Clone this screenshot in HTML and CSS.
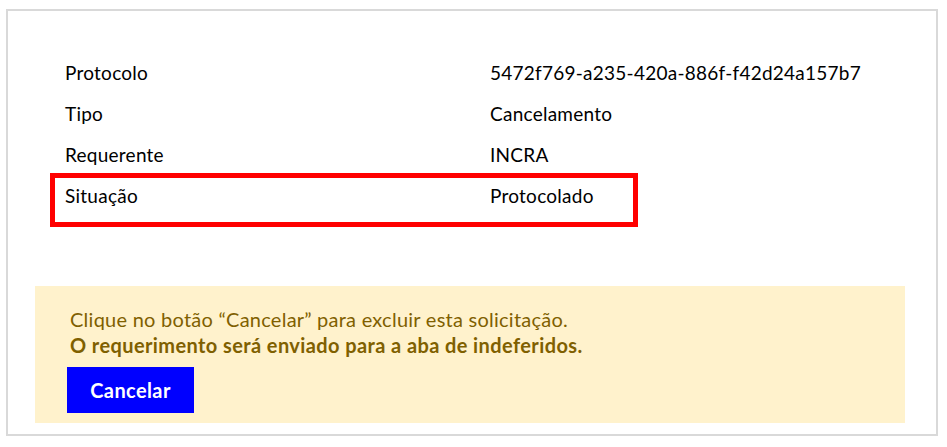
FILE: index.html
```html
<!DOCTYPE html>
<html lang="pt-BR">
<head>
  <meta charset="UTF-8" />
  <meta name="viewport" content="width=device-width, initial-scale=1.0"/>
  <title>Requerimento</title>
  <link rel="stylesheet" href="styles.css">
</head>
<body>
  <div class="frame">
    <div class="details">
      <div class="row">
        <span>Protocolo</span>
        <span>5472f769-a235-420a-886f-f42d24a157b7</span>
      </div>
      <div class="row">
        <span>Tipo</span>
        <span>Cancelamento</span>
      </div>
      <div class="row">
        <span>Requerente</span>
        <span>INCRA</span>
      </div>
      <div class="row highlight">
        <span>Situação</span>
        <span>Protocolado</span>
      </div>
    </div>

    <div class="notice">
      <p>Clique no botão “Cancelar” para excluir esta solicitação.</p>
      <p class="strong">O requerimento será enviado para a aba de indeferidos.</p>
      <button>Cancelar</button>
    </div>
  </div>
</body>
</html>
```

FILE: styles.css
```css
body {
  margin: 0;
  background: white;
  font-family: Lato, "Open Sans", sans-serif;
  color: #000;
}
.frame {
  box-sizing: border-box;
  margin: 9px 0 0 6px;
  width: 932px;
  height: 427px;
  border: 2px solid #d9d9d9;
  padding-top: 41px;
}
.details {
  margin-left: 42px;
}
.row {
  display: grid;
  grid-template-columns: 425px auto;
  height: 41px;
  line-height: 41px;
  padding-left: 15px;
  font-size: 19px;
  letter-spacing: 0.25px;
}
.highlight {
  box-sizing: border-box;
  width: 588px;
  height: 54px;
  margin-top: -2px;
  padding-left: 10px;
  border: 5px solid #ff0000;
  line-height: 36px;
}
.notice {
  box-sizing: border-box;
  margin: 59px 0 0 27px;
  width: 870px;
  height: 137px;
  background: #fff2cc;
  color: #7f6000;
  padding: 20px 0 0 35px;
  font-size: 20px;
  letter-spacing: 0.25px;
}
.notice p {
  margin: 0;
  line-height: 26px;
}
.strong {
  font-weight: bold;
  letter-spacing: 0.4px;
}
button {
  margin: 9px 0 0 -3px;
  width: 127px;
  height: 46px;
  background: #0000ff;
  color: white;
  border: none;
  font-family: Lato, "Open Sans", sans-serif;
  font-size: 20px;
  font-weight: bold;
  letter-spacing: 0.4px;
  cursor: pointer;
}
```
